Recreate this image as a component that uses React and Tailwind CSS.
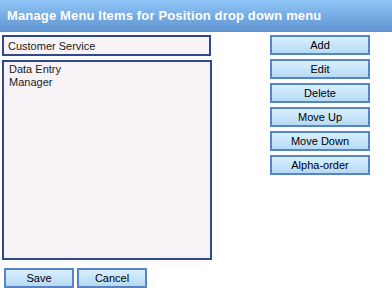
import React from "react";

const sideButtons = ["Add", "Edit", "Delete", "Move Up", "Move Down", "Alpha-order"];

function Btn({ label, className = "" }) {
  return (
    <button
      type="button"
      className={
        "h-[20px] border-2 border-[#5584cc] bg-gradient-to-b from-[#d9f0ff] to-[#b6daf3] text-[11px] leading-none text-black " +
        className
      }
    >
      {label}
    </button>
  );
}

export default function App() {
  return (
    <div className="w-[392px] h-[296px] bg-white font-['Liberation_Sans',Arial,sans-serif]">
      <div className="h-[32px] flex items-center pl-[7px] bg-gradient-to-b from-[#8fc6f7] to-[#5f93cf]">
        <h1 className="text-white font-bold text-[13px] tracking-[0.15px]">
          Manage Menu Items for Position drop down menu
        </h1>
      </div>

      <div className="flex pl-[2px] pt-[3px]">
        <div className="w-[210px]">
          <input
            type="text"
            defaultValue="Customer Service"
            className="block w-[209px] h-[21px] border-2 border-[#30498c] bg-[#f8f3f7] px-[4px] text-[11px] text-[#222] outline-none"
          />
          <div className="mt-[4px] h-[200px] border-2 border-[#30498c] bg-[#f8f3f7] px-[5px] pt-[1px] text-[11px] leading-[13px] text-[#222]">
            <div>Data Entry</div>
            <div>Manager</div>
          </div>
        </div>

        <div className="ml-[58px] flex flex-col gap-[4px]">
          {sideButtons.map((b) => (
            <Btn key={b} label={b} className="w-[100px]" />
          ))}
        </div>
      </div>

      <div className="flex gap-[3px] pl-[4px] pt-[8px]">
        <Btn label="Save" className="w-[70px]" />
        <Btn label="Cancel" className="w-[70px]" />
      </div>
    </div>
  );
}
